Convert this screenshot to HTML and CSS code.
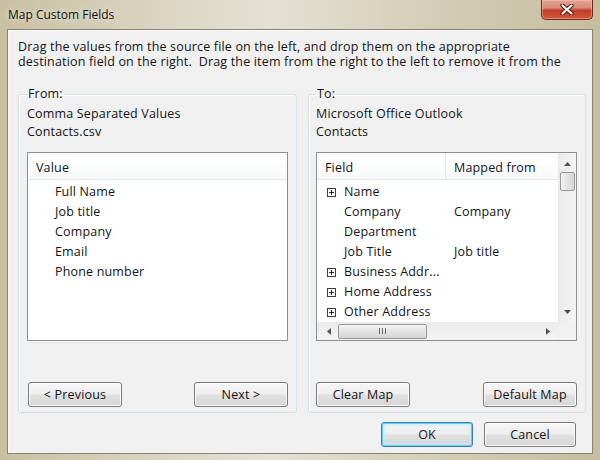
FILE: index.html
```html
<!DOCTYPE html>
<html>
  <head>
    <title>Map Custom Fields</title>
    <meta charset="utf-8" />
    <link rel="stylesheet" href="styles.css">
  </head>
  <body>
    <div class="window">
      <div class="titlebar">
        <span class="title">Map Custom Fields</span>
        <button class="close" aria-label="Close">
          <svg width="14" height="11" viewBox="0 0 14 11">
            <path d="M2.5 1.5 L11.5 9.5 M11.5 1.5 L2.5 9.5" stroke="#4a1a10" stroke-width="4.2" stroke-linecap="round" />
            <path d="M2.5 1.5 L11.5 9.5 M11.5 1.5 L2.5 9.5" stroke="#fff" stroke-width="2.2" stroke-linecap="round" />
          </svg>
        </button>
      </div>

      <div class="client">
        <p class="intro">
          Drag the values from the source file on the left, and drop them on the appropriate<br />
          destination field on the right.&nbsp; Drag the item from the right to the left to remove it from the
        </p>

        <div class="groups">
          <fieldset class="group group-from">
            <legend>From:</legend>
            <div class="source">Comma Separated Values</div>
            <div class="source">Contacts.csv</div>

            <div class="list">
              <div class="list-head"><span class="head-cell">Value</span></div>
              <ul class="rows">
                <li>Full Name</li>
                <li>Job title</li>
                <li>Company</li>
                <li>Email</li>
                <li>Phone number</li>
              </ul>
            </div>

            <div class="group-buttons">
              <button class="btn">&lt; Previous</button>
              <button class="btn">Next &gt;</button>
            </div>
          </fieldset>

          <fieldset class="group group-to">
            <legend>To:</legend>
            <div class="source">Microsoft Office Outlook</div>
            <div class="source">Contacts</div>

            <div class="list list-grid">
              <div class="list-body">
                <div class="list-head map-cols">
                  <span class="head-cell">Field</span>
                  <span class="head-cell">Mapped from</span>
                </div>
                <ul class="rows map-rows">
                  <li class="map-cols"><span class="field"><i class="plus"></i>Name</span><span></span></li>
                  <li class="map-cols"><span class="field">Company</span><span>Company</span></li>
                  <li class="map-cols"><span class="field">Department</span><span></span></li>
                  <li class="map-cols"><span class="field">Job Title</span><span>Job title</span></li>
                  <li class="map-cols"><span class="field"><i class="plus"></i>Business Addr...</span><span></span></li>
                  <li class="map-cols"><span class="field"><i class="plus"></i>Home Address</span><span></span></li>
                  <li class="map-cols"><span class="field"><i class="plus"></i>Other Address</span><span></span></li>
                </ul>
              </div>

              <!-- vertical scrollbar -->
              <div class="vscroll">
                <svg class="arrow" width="7" height="4" viewBox="0 0 7 4"><path d="M0 4 L3.5 0 L7 4 Z" fill="#505050" /></svg>
                <div class="vthumb"></div>
                <span class="fill"></span>
                <svg class="arrow" width="7" height="4" viewBox="0 0 7 4"><path d="M0 0 L7 0 L3.5 4 Z" fill="#505050" /></svg>
              </div>

              <!-- horizontal scrollbar -->
              <div class="hscroll">
                <svg class="arrow" width="4" height="7" viewBox="0 0 4 7"><path d="M4 0 L4 7 L0 3.5 Z" fill="#505050" /></svg>
                <div class="hthumb">
                  <svg width="9" height="6" viewBox="0 0 9 6">
                    <path d="M1.5 0 V6 M4.5 0 V6 M7.5 0 V6" stroke="#6b6b6b" stroke-width="1" />
                  </svg>
                </div>
                <span class="fill"></span>
                <svg class="arrow" width="4" height="7" viewBox="0 0 4 7"><path d="M0 0 L4 3.5 L0 7 Z" fill="#505050" /></svg>
              </div>
              <div class="corner"></div>
            </div>

            <div class="group-buttons">
              <button class="btn">Clear Map</button>
              <button class="btn">Default Map</button>
            </div>
          </fieldset>
        </div>

        <div class="footer">
          <button class="btn btn-default">OK</button>
          <button class="btn">Cancel</button>
        </div>
      </div>
    </div>
  </body>
</html>
```

FILE: styles.css
```css
body {
  margin: 0;
  font-family: "Open Sans", "Noto Sans", sans-serif;
  font-size: 12.5px;
  letter-spacing: 0.17px;
  color: #141414;
  background: #d3cbb1;
}
.window {
  width: 600px;
  height: 460px;
  background: linear-gradient(to right, #c9c0a2 0%, #ddd7c5 30%, #e4e0d3 45%, #d6cfb8 70%, #c6bd9f 100%);
}

/* title bar */
.titlebar {
  height: 29px;
  display: flex;
  justify-content: space-between;
  align-items: flex-start;
  padding: 0 7px 0 8px;
}
.title {
  font-size: 12px;
  letter-spacing: 0;
  line-height: 30px;
  color: #111;
  text-shadow: 0 0 6px rgba(255, 255, 255, 0.8);
}
.close {
  width: 52px;
  height: 20px;
  padding: 0;
  display: flex;
  align-items: center;
  justify-content: center;
  border: 1px solid #6b2a1e;
  border-top: 0;
  border-radius: 0 0 5px 5px;
  background: linear-gradient(#e3a597 0%, #d98a78 40%, #c23d25 55%, #d0583c 100%);
  box-shadow: inset 0 0 0 1px rgba(255, 200, 190, 0.45);
}

/* client area */
.client {
  height: 425px;
  margin: 0 7px;
  box-sizing: border-box;
  border: 1px solid #888374;
  background: #f0f0f0;
  box-shadow: inset 1px 1px 0 #fafafa;
  padding: 9px 6px 0 10px;
}
.intro {
  margin: 0;
  line-height: 15px;
  height: 30px;
  overflow: hidden;
  white-space: nowrap;
}

/* group boxes */
.groups {
  display: flex;
  gap: 11px;
  margin-top: 16px;
}
.group {
  margin: 0;
  border: 1px solid #d5dfe5;
  border-radius: 3px;
  box-shadow: inset 1px 1px 0 #fff;
  padding: 2px 8px 5px 8px;
  min-width: 0;
}
.group-from {
  width: 279px;
  box-sizing: border-box;
}
.group-to {
  width: 278px;
  box-sizing: border-box;
  padding-left: 7px;
}
.group legend {
  padding: 0 1px;
  line-height: 18px;
}
.source {
  line-height: 18px;
}

/* list views */
.list {
  margin-top: 11px;
  height: 189px;
  box-sizing: border-box;
  border: 1px solid #8e8f8f;
  background: #fff;
}
.list-head {
  height: 27px;
  box-sizing: border-box;
  border-bottom: 1px solid #e3e6ea;
  background: linear-gradient(#fff, #f8f9fa);
}
.head-cell {
  display: block;
  padding: 5px 0 0 8px;
  line-height: 20px;
}
.rows {
  list-style: none;
  margin: 0;
  padding: 2px 0 0 0;
}
.rows li {
  height: 20px;
  line-height: 20px;
  padding-left: 27px;
  white-space: nowrap;
}

/* right list: body + scrollbars */
.list-grid {
  display: grid;
  grid-template-columns: 1fr 18px;
  grid-template-rows: 1fr 18px;
}
.list-body {
  overflow: hidden;
}
.map-cols {
  display: grid;
  grid-template-columns: 128px 1fr;
}
.list-head.map-cols .head-cell + .head-cell {
  border-left: 1px solid #e3e6ea;
}
.map-rows li {
  padding-left: 0;
}
.map-rows .field {
  display: flex;
  align-items: center;
  padding-left: 27px;
}
.map-rows li span + span {
  padding-left: 9px;
}
.plus {
  width: 7px;
  height: 7px;
  margin: 0 8px 0 -17px;
  border: 1px solid #3c3c3c;
  background:
    linear-gradient(#2a2a2a, #2a2a2a) center / 5px 1px no-repeat,
    linear-gradient(#2a2a2a, #2a2a2a) center / 1px 5px no-repeat,
    #fff;
}

.vscroll,
.hscroll {
  display: flex;
  align-items: center;
  background: linear-gradient(to right, #eaeaea, #f4f4f4);
}
.vscroll {
  flex-direction: column;
  padding: 9px 0 8px;
  box-sizing: border-box;
}
.hscroll {
  padding: 0 8px 0 10px;
  background: linear-gradient(#eaeaea, #f4f4f4);
}
.fill {
  flex: 1;
}
.vthumb {
  width: 15px;
  height: 19px;
  margin-top: 6px;
  box-sizing: border-box;
  border: 1px solid #979797;
  border-radius: 2px;
  background: linear-gradient(to right, #f3f3f3, #e2e2e2 50%, #d6d6d6);
}
.hthumb {
  width: 89px;
  height: 15px;
  margin-left: 7px;
  box-sizing: border-box;
  display: flex;
  align-items: center;
  justify-content: center;
  border: 1px solid #979797;
  border-radius: 2px;
  background: linear-gradient(#f3f3f3, #e2e2e2 50%, #d6d6d6);
}
.corner {
  background: #f0f0f0;
}

/* buttons */
.btn {
  height: 25px;
  padding: 0;
  box-sizing: border-box;
  font: inherit;
  letter-spacing: inherit;
  color: #141414;
  border: 1px solid #7a7a7a;
  border-radius: 3px;
  background: linear-gradient(#f6f6f6 0%, #eeeeee 48%, #e0e0e0 52%, #d6d6d6 100%);
  box-shadow: inset 0 0 0 1px #fbfbfb;
}
.group-buttons {
  display: flex;
  justify-content: space-between;
  margin-top: 41px;
  padding-left: 1px;
}
.group-from .btn {
  width: 94px;
}
.group-to .group-buttons {
  padding-left: 0;
}
.group-to .btn {
  width: 94px;
}
.footer {
  display: flex;
  justify-content: flex-end;
  gap: 11px;
  margin-top: 9px;
  padding-right: 10px;
}
.footer .btn {
  width: 92px;
}
.btn-default {
  border-color: #3c7fb1;
  box-shadow: inset 0 0 0 1px #5fd0f5, inset 0 0 3px 2px #c4ecfb;
}
```
